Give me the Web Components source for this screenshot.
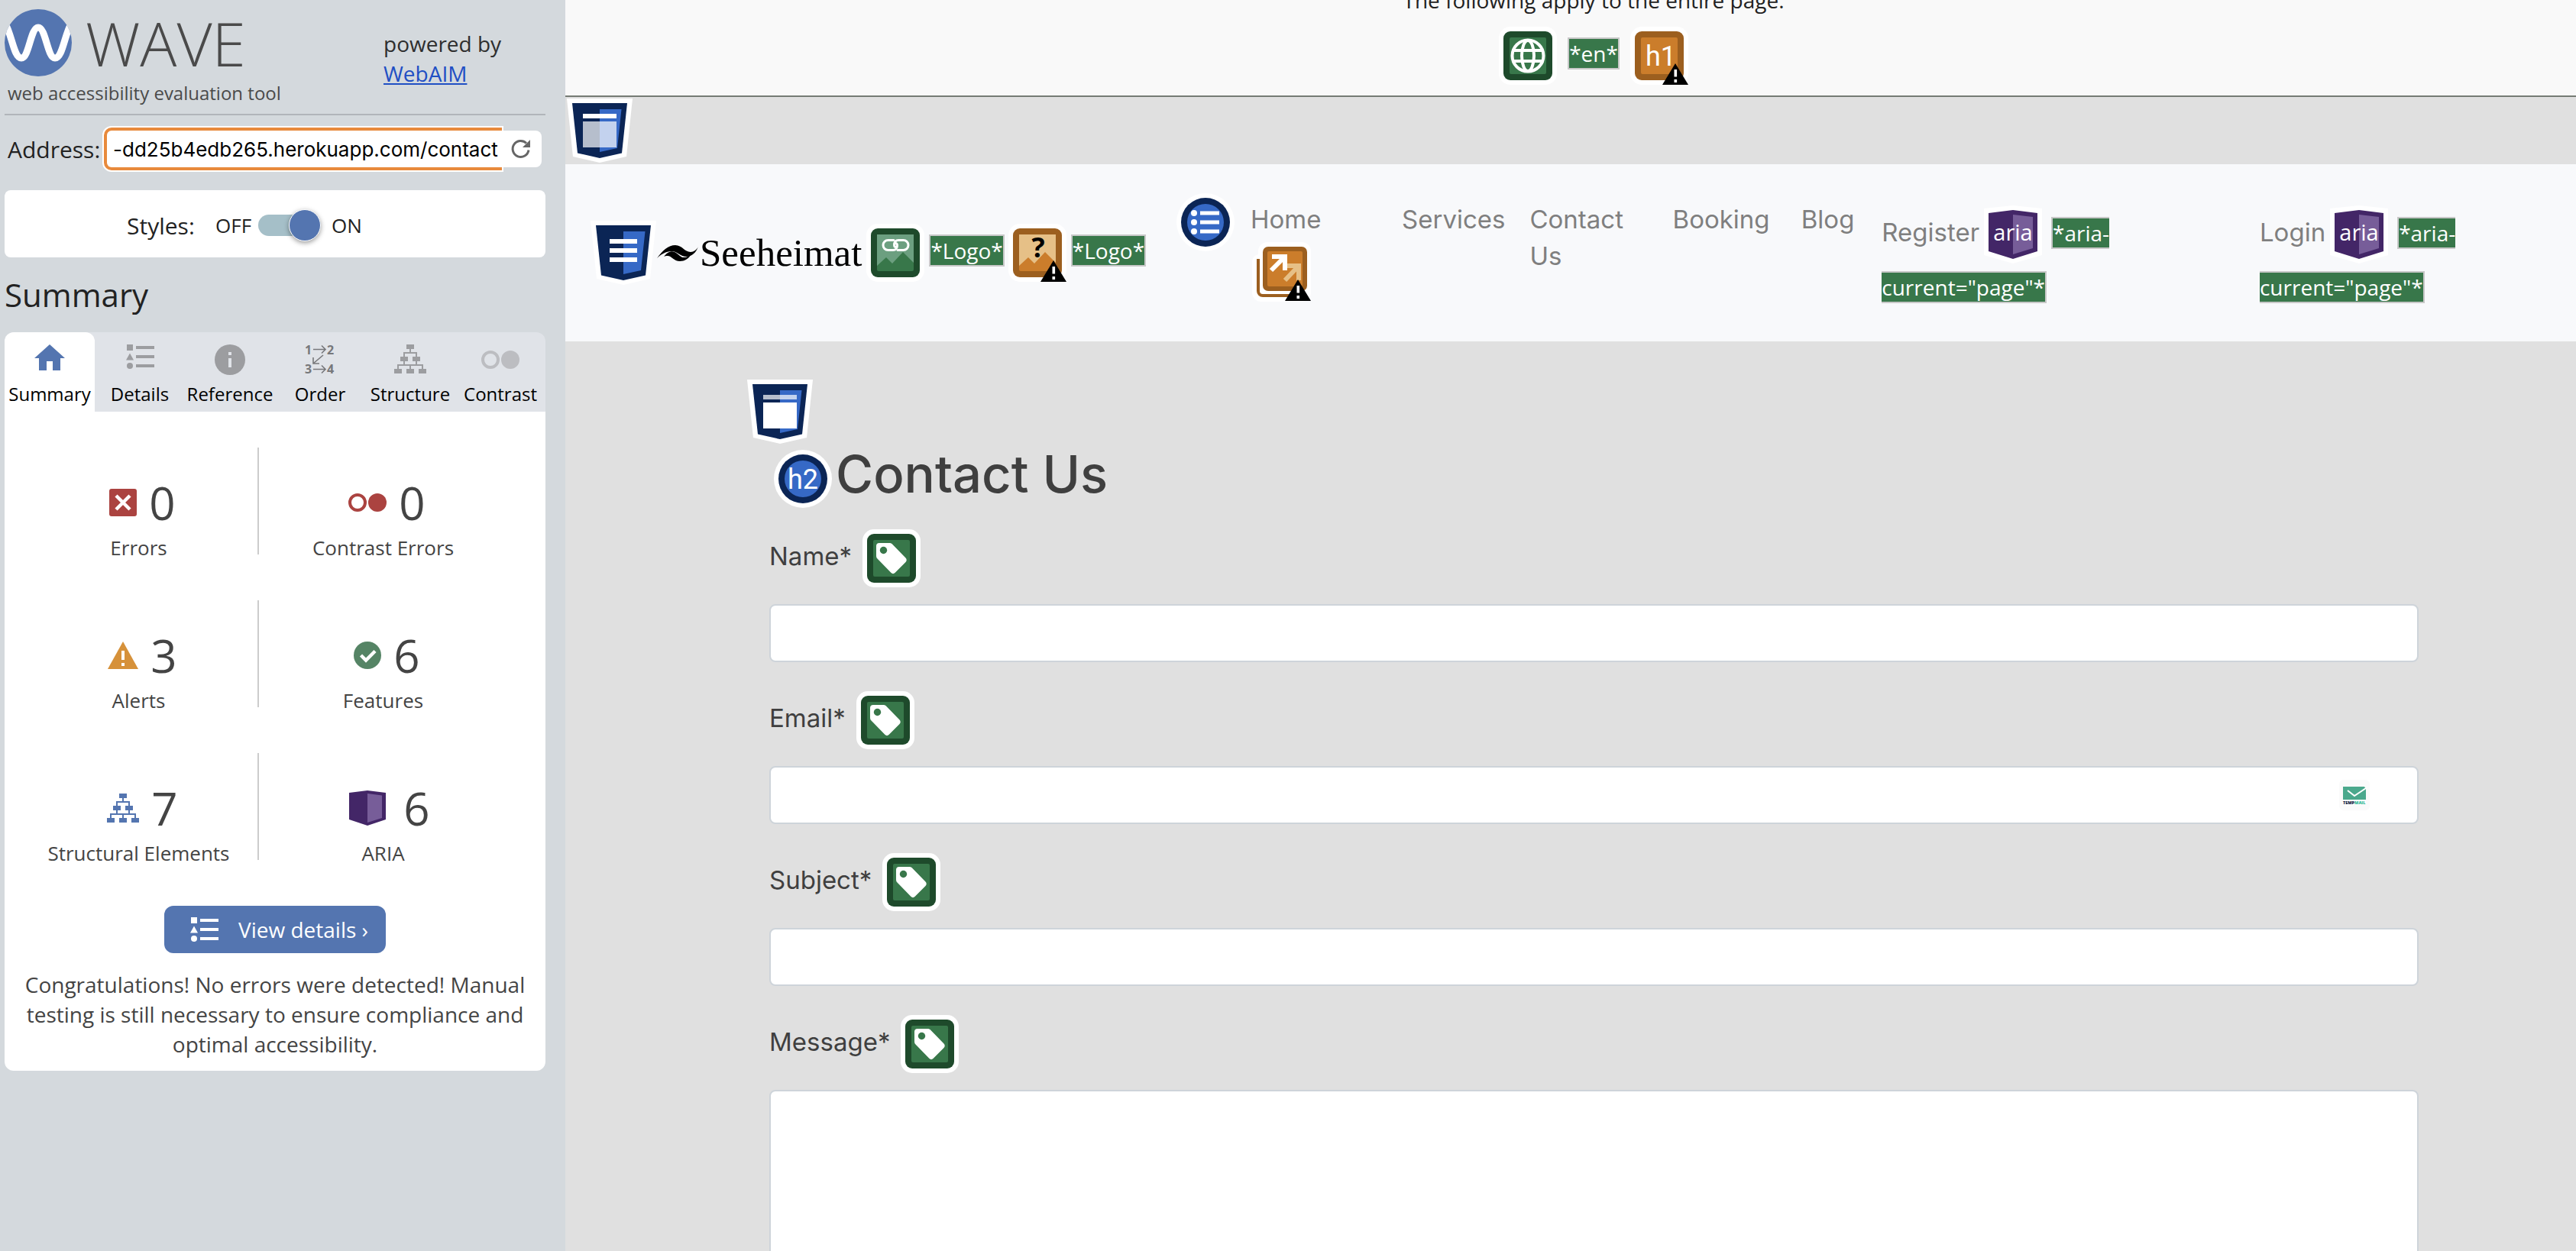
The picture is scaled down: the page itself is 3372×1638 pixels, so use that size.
<!DOCTYPE html>
<html lang="en">
<head>
<meta charset="utf-8">
<title>WAVE Report of Seeheimat</title>
<style>
  html, body { margin: 0; height: 100%; }
  body { overflow: hidden; font-family: "Open Sans", "Noto Sans", sans-serif; }
</style>
</head>
<body>
<wave-app></wave-app>

<script>
const define = (name, css, html) => {
  const template = document.createElement('template');
  template.innerHTML = `<style>*, *::before { box-sizing: border-box; } ${css}</style>`;
  customElements.define(name, class extends HTMLElement {
    connectedCallback() {
      if (this.shadowRoot) return;
      const root = this.attachShadow({ mode: 'open' });
      root.append(template.content.cloneNode(true));
      const body = document.createElement('template');
      body.innerHTML = typeof html === 'function' ? html(this) : html;
      root.append(body.content);
    }
  });
};

/* ---------- evaluation badges ---------- */
const NAVY = '#0b2555', BLUE = '#3669c6';
const alertMark = (x, y) => `<g transform="translate(${x} ${y})"><path d="M17 0 34 28H0z" fill="#000"/><path d="M15.5 8h3.6v9.500h-3.600zM15.500 21h3.600v4h-3.600z" fill="#fff"/></g>`;
const square = (dark, light, inner) => `<svg width="76" height="76" viewBox="0 0 76 76" aria-hidden="true">
  <rect width="76" height="76" rx="15" fill="#fff"/><rect x="6" y="6" width="64" height="64" rx="9" fill="${dark}"/>
  <rect x="14" y="14" width="48" height="48" rx="2" fill="${light}"/>${inner}</svg>`;
const green = inner => square('#1e4a2b', '#38774a', inner);
const orange = inner => square('#9c5f1f', '#cb7d2b', inner);
const round = inner => `<svg width="76" height="76" viewBox="0 0 76 76" aria-hidden="true">
  <circle cx="38" cy="38" r="38" fill="#fff"/><circle cx="38" cy="38" r="32" fill="${NAVY}"/>
  <circle cx="38" cy="38" r="24" fill="${BLUE}"/>${inner}</svg>`;
const shield = inner => `<svg width="86" height="84" viewBox="0 0 86 84" aria-hidden="true">
  <path d="M0 0H86L78 76 43 84 8 76z" fill="#fff"/><path d="M7 6H79L72 71.500 43 78 14 71.500z" fill="${NAVY}"/>
  <path d="M43 14H71.500L66 65 43 70z" fill="${BLUE}"/>${inner}</svg>`;
const glyph = (text, x) => `<text x="${x}" y="51" font-family="Roboto, sans-serif" font-size="36" font-weight="400" fill="#fff">${text}</text>`;
const BADGES = {
  language: green(`<g fill="none" stroke="#fff" stroke-width="4"><circle cx="38" cy="38" r="20.500"/><ellipse cx="38" cy="38" rx="8" ry="20"/><path d="M19 31H57M19 45H57"/></g>`),
  noh1: orange(glyph('h1', 20) + alertMark(42, 48)),
  header: shield(`<path d="M21 20H65V26H21z" fill="#fff"/><path d="M21 30H65V64H21z" fill="#fff" opacity=".7"/>`),
  main: shield(`<path d="M21 20H65V26H21z" fill="#fff" opacity=".7"/><path d="M21 30H65V64H21z" fill="#fff"/>`),
  nav: shield(`<path d="M25 24H61V30H25zM25 36H61V42H25zM25 48H61V54H25z" fill="#fff"/>`),
  linkalt: green(`<path d="M14 14H62V51L48 37 34 52 26 44 14 55z" fill="#6c9f80"/>
    <g fill="none" stroke="#fff" stroke-width="3" stroke-linecap="round"><path d="M36 21.500h-7.500a6.500 6.500 0 0 0 0 13H35c3.500 0 5.500-2.500 5.500-6 0-2-1-3-2.500-3"/><path d="M29 34.500M41 34.500h7.500a6.500 6.500 0 0 0 0-13H42c-3.500 0-5.500 2.500-5.500 6 0 2 1 3 2.500 3"/></g>`),
  suspiciousalt: orange(`<path d="M14 14H62V51L48 37 34 52 26 44 14 55z" fill="#e6c087"/>
    <text x="39" y="44" text-anchor="middle" font-family="Open Sans, sans-serif" font-weight="700" font-size="36" fill="#000">?</text>${alertMark(42, 48)}`),
  list: round(`<g fill="#fff"><circle cx="23" cy="26" r="4"/><circle cx="23" cy="38" r="4"/><circle cx="23" cy="50" r="4"/><path d="M31 23.500H56V28.500H31zM31 35.500H56V40.500H31zM31 47.500H56V52.500H31z"/></g>`),
  h2: round(glyph('h2', 18)),
  redundant: `<svg width="78" height="78" viewBox="0 0 78 78" aria-hidden="true">
    <path d="M20 0H65a12 12 0 0 1 12 12V66a12 12 0 0 1-12 12H12A12 12 0 0 1 0 66V26A10 10 0 0 1 8 16V12A12 12 0 0 1 20 0z" fill="#fff"/>
    <path d="M8 22V64a6 6 0 0 0 6 6H60" fill="none" stroke="#9c5f1f" stroke-width="4"/>
    <rect x="14" y="6" width="58" height="58" rx="7" fill="#9c5f1f"/><rect x="20" y="12" width="46" height="46" rx="2" fill="#cb7d2b"/>
    <path d="M46 31H61V50M61 31 43 50" fill="none" stroke="#e6c087" stroke-width="6"/>
    <path d="M26 19H43V37M43 19 25 37" fill="none" stroke="#fff" stroke-width="6"/>${alertMark(43, 49)}</svg>`,
  aria: `<svg width="76" height="76" viewBox="0 0 76 76" aria-hidden="true">
    <path d="M0 4 38 0 76 4V65L38 76 0 65z" fill="#fff"/><path d="M6 10 38 6 70 10V60L38 70 6 60z" fill="#432667"/>
    <path d="M38 12 64 15V56L38 64z" fill="#775d99"/>
    <text x="38" y="46" text-anchor="middle" font-family="Open Sans, sans-serif" font-size="29" fill="#fff">aria</text></svg>`,
  label: green(`<path d="M22 18H35c2 0 3 .5 4 1.500L56.500 37.500c1.600 1.600 1.600 4 0 5.500L42.500 57c-1.500 1.500-3.500 1.500-5 0L19.500 38.500c-1-1-1.500-2-1.500-4V22a4 4 0 0 1 4-4z" fill="#fff"/><circle cx="27.500" cy="27.500" r="4.700" fill="#38774a"/>`)
};
define('wave-badge', `
  :host { display: inline-block; vertical-align: middle; line-height: 0; }
  svg { display: block; }
`, el => BADGES[el.getAttribute('kind')]);

define('alt-text', `
  :host { display: inline; font: 28px "Open Sans", "Noto Sans", sans-serif; color: #fff;
    background: #38774a; border: 2px solid #c8c8c8; }
`, '<slot></slot>');

/* ---------- sidebar icons ---------- */
const tree = `<path d="M16 0h10v6H16zM8 16h10v6H8zM24 16h10v6H24zM0 32h10v6H0zM16 32h10v6H16zM32 32h10v6H32z"/><path d="M21 6V11M13 16V11H29V16M13 22V27M29 22V27M5 32V27H37V32M21 27V32" fill="none" stroke="currentColor" stroke-width="2"/>`;
const listShapes = `<path d="M1 0h8v8H1zM5 11.500 10 20.500H0zM13 2H37V6H13zM13 14H37V18H13zM13 26H37V30H13z"/><circle cx="5" cy="28" r="4"/>`;
const dots = `<circle cx="12" cy="12" r="10" fill="none" stroke="currentColor" stroke-width="4"/><circle cx="38" cy="12" r="12"/>`;
const ICONS = {
  home: [40, 40, `<path d="M20 0 40 18H34V34H24V22H16V34H6V18H0z"/>`],
  details: [37, 40, listShapes],
  info: [40, 40, `<circle cx="20" cy="20" r="20"/><path d="M18 10h4v4h-4zM18 18h4v12h-4z" fill="#e0e3e8"/>`],
  order: [40, 40, `<g font-family="Open Sans, sans-serif" font-weight="700" font-size="16"><text x="0" y="13">1</text><text x="29" y="13">2</text><text x="0" y="38">3</text><text x="29" y="38">4</text></g>
    <g fill="none" stroke="currentColor" stroke-width="1.600"><path d="M11 6.500H27M22 1.500 27 6.500 22 11.500M11 32.500H27M22 27.500 27 32.500 22 37.500M24 14 11 25M11 17V25H19"/></g>`],
  structure: [42, 40, tree],
  contrast: [50, 40, `<g transform="translate(0 8)">${dots}</g>`],
  error: [36, 36, `<rect width="36" height="36" rx="3"/><path d="M9 9 27 27M27 9 9 27" stroke="#fff" stroke-width="4.500"/>`],
  contrastErrors: [50, 24, dots],
  alert: [40, 36, `<path d="M20 0 40 36H0z"/><path d="M18 12h4v12h-4zM18 28h4v4h-4z" fill="#fff"/>`],
  feature: [36, 36, `<circle cx="18" cy="18" r="18"/><path d="M9.500 18 16 24.500 28 12.500" fill="none" stroke="#fff" stroke-width="4.500"/>`],
  tree: [42, 38, tree],
  ariaShield: [62, 46, `<g transform="translate(7 0)"><path d="M0 3 24 0 48 3V38L24 46 0 38z"/><path d="M24 4 43 6.500V36L24 42z" fill="#775d99"/></g>`],
  list: [37, 32, listShapes],
  reload: [26, 26, `<path d="M23 14.500A10.500 10.500 0 1 1 20 5.500" fill="none" stroke="currentColor" stroke-width="3"/><path d="M25 1V11H15z"/>`]
};
define('wave-icon', `
  :host { display: block; line-height: 0; flex: none; }
  svg { display: block; fill: currentColor; overflow: visible; }
`, el => {
  const [w, h, shapes] = ICONS[el.getAttribute('name')];
  return `<svg width="${w}" height="${h}" viewBox="0 0 ${w} ${h}" aria-hidden="true">${shapes}</svg>`;
});

/* ---------- sidebar ---------- */
define('wave-brand', `
  :host { display: flex; justify-content: space-between; border-bottom: 2px solid #b1b5ba; padding-top: 12px; height: 151px; }
  .name { display: flex; gap: 18px; font-size: 80px; line-height: 88px; font-weight: 300; color: #4a4a4a; }
  h1 { margin: 0; font: inherit; }
  p { margin: 4px 0 0 4px; font-size: 24px; line-height: 36px; color: #4a4a4a; }
  .by { width: 212px; padding-top: 26px; font-size: 28px; line-height: 39px; color: #2e2e2e; }
  a { display: block; color: #1f4fc4; }
`, `<div><div class="name">
    <svg width="88" height="88" viewBox="0 0 88 88" aria-hidden="true"><clipPath id="c"><circle cx="44" cy="44" r="44"/></clipPath>
      <circle cx="44" cy="44" r="44" fill="#5475b0"/>
      <path clip-path="url(#c)" d="M0 17C10 34 12 64 22 64S34 24 44 24S56 64 66 64S78 34 88 17" fill="none" stroke="#fff" stroke-width="9"/></svg>
    <h1>WAVE</h1></div><p>web accessibility evaluation tool</p></div>
  <div class="by">powered by <a href="#webaim">WebAIM</a></div>`);

define('address-bar', `
  :host { display: flex; align-items: center; margin: 16px 5px 0 4px; height: 56px; }
  label { font-size: 30px; color: #222; width: 126px; flex: none; }
  input { flex: 1; min-width: 0; height: 56px; border: 4px solid #e88a3c; border-right: 0; border-radius: 10px 0 0 10px;
    box-shadow: 0 0 0 2px #fff; outline: 0; padding: 0 0 0 8px; font: 26px Inter, sans-serif; color: #000; background: #fff; }
  button { position: relative; width: 52px; height: 48px; border: 0; padding: 0 0 0 12px; background: #fff; border-radius: 0 8px 8px 0; color: #666; }
`, `<label for="url">Address:</label><input id="url" type="text" value="-dd25b4edb265.herokuapp.com/contact">
  <button type="button" aria-label="Reload"><wave-icon name="reload"></wave-icon></button>`);

define('style-switch', `
  :host { display: flex; align-items: center; height: 88px; margin-top: 26px; padding: 4px 0 0 160px; background: #fff; border-radius: 8px;
    font-size: 26px; color: #222; box-sizing: border-box; }
  label { font-size: 30px; width: 116px; }
  .off { width: 56px; }
  input { appearance: none; display: flex; align-items: center; justify-content: flex-end; width: 82px; height: 28px; margin: 0 14px 0 0;
    border-radius: 14px; background: #a5bfc8; }
  input::before { content: ""; flex: none; width: 42px; height: 42px; border-radius: 50%; background: #5475b0; border: 1px solid #fff; box-shadow: 0 2px 6px #0006; }
`, `<label for="sw">Styles:</label><span class="off">OFF</span><input id="sw" type="checkbox" role="switch" checked><span>ON</span>`);

define('panel-tab', `
  :host { display: flex; flex: 1; }
  button { flex: 1; display: flex; flex-direction: column; align-items: center; gap: 8px; border: 0; padding: 16px 0 7px; margin: 0;
    background: none; border-radius: 12px 12px 0 0; font: 24px/33px "Open Sans", sans-serif; color: #000; min-width: 0; }
  wave-icon { color: #9c9da0; }
  :host([name="order"]) wave-icon { color: #77787b; }
  :host([name="contrast"]) wave-icon { color: #bcbdc1; }
  :host([selected]) button { background: #fff; }
  :host([selected]) wave-icon { color: #5475b0; }
`, el => `<button type="button" role="tab" aria-selected="${el.hasAttribute('selected')}"><wave-icon name="${el.getAttribute('name')}"></wave-icon><slot></slot></button>`);

define('stat-card', `
  :host { display: block; flex: 1; padding-top: 32px; color: #444; text-align: center; }
  :host([wide]) { flex: none; width: 325px; }
  .value { display: flex; align-items: center; justify-content: center; gap: 16px; font-size: 60px; line-height: 80px; padding-left: 10px; }
  .label { font-size: 26px; line-height: 38px; }
`, el => `<div class="value"><wave-icon name="${el.getAttribute('icon')}" style="color:${el.getAttribute('tint')}"></wave-icon>${el.getAttribute('value')}</div><div class="label"><slot></slot></div>`);

define('stat-row', `
  :host { display: flex; height: 200px; padding: 0 50px 0 20px; }
  i { width: 2px; height: 140px; background: #ccc; order: 1; }
  ::slotted([wide]) { order: 2; }
`, '<i></i><slot></slot>');

define('summary-panel', `
  :host { display: block; }
  h2 { margin: 20px 0 21px; font-size: 42px; line-height: 57px; font-weight: 400; color: #222; }
  .tabs { display: flex; height: 104px; background: #e0e3e8; border-radius: 12px 12px 0 0; }
  .body { background: #fff; border-radius: 0 0 12px 12px; padding: 47px 0 15px; }
  button { display: flex; align-items: center; gap: 26px; width: 290px; height: 62px; margin: 0 auto 22px; padding: 0 0 0 34px; border: 0; border-radius: 12px;
    background: #5475b0; color: #fff; font: 28px "Open Sans", sans-serif; }
  p { margin: 0; padding: 0 20px; text-align: center; font-size: 28px; line-height: 39px; color: #444; }
`, `<h2>Summary</h2>
  <div class="tabs" role="tablist">
    <panel-tab name="home" selected>Summary</panel-tab><panel-tab name="details">Details</panel-tab><panel-tab name="info">Reference</panel-tab>
    <panel-tab name="order">Order</panel-tab><panel-tab name="structure">Structure</panel-tab><panel-tab name="contrast">Contrast</panel-tab>
  </div>
  <div class="body">
    <stat-row><stat-card icon="error" tint="#ab4340" value="0">Errors</stat-card><stat-card wide icon="contrastErrors" tint="#ab4340" value="0">Contrast Errors</stat-card></stat-row>
    <stat-row><stat-card icon="alert" tint="#d6913a" value="3">Alerts</stat-card><stat-card wide icon="feature" tint="#558465" value="6">Features</stat-card></stat-row>
    <stat-row><stat-card icon="tree" tint="#5475b0" value="7">Structural Elements</stat-card><stat-card wide icon="ariaShield" tint="#432667" value="6">ARIA</stat-card></stat-row>
    <button type="button"><wave-icon name="list"></wave-icon>View details ›</button>
    <p>Congratulations! No errors were detected! Manual testing is still necessary to ensure compliance and optimal accessibility.</p>
  </div>`);

define('wave-sidebar', `
  :host { display: block; background: #d4d9dd; padding: 0 26px 0 6px; }
`, `<wave-brand></wave-brand><address-bar></address-bar><style-switch></style-switch><summary-panel></summary-panel>`);

/* ---------- evaluated page ---------- */
define('page-notes', `
  :host { display: flex; flex-direction: column; justify-content: flex-end; align-items: center; gap: 14px; height: 127px; overflow: hidden;
    padding: 0 0 14px 60px; background: #f9f9f9; border-bottom: 2px solid #757b74; color: #222; font-size: 28px; line-height: 41px; box-sizing: border-box; }
  p { margin: 0; flex: none; }
  div { flex: none; white-space: nowrap; }
  alt-text { margin: 0 14px; }
`, `<p>The following apply to the entire page:</p>
  <div><wave-badge kind="language"></wave-badge><alt-text>*en*</alt-text><wave-badge kind="noh1"></wave-badge></div>`);

define('nav-link', `
  :host { display: block; padding: 0 16px; }
  a { color: #7f7f7f; text-decoration: none; }
  ::slotted(wave-badge) { margin: 6px; }
  ::slotted(wave-badge[kind="redundant"]) { margin: 6px 6px 4px 2px; }
`, '<a href="#page"><slot></slot></a>');

define('site-header', `
  :host { display: flex; align-items: center; padding: 38px 16px 38px 33px; background: #f8f9fb; }
  a { color: #000; text-decoration: none; white-space: nowrap; font-size: 28px; line-height: 41px; }
  .logo { display: inline-flex; align-items: center; vertical-align: middle; gap: 1px; font: 51px "Liberation Serif", serif; margin-right: 6px; }
  .start { display: flex; align-items: center; width: 767px; flex: none; }
  alt-text { margin: 0 5px 0 6px; }
  nav { display: flex; align-items: flex-start; gap: 5px; flex: 1; min-width: 0; }
  .links { flex: 1; min-width: 0; display: grid; grid-template-columns: 199fr 161fr 188fr 169fr 106fr 497fr 416fr; padding: 10px 0;
    font: 33px/48px Inter, sans-serif; }
`, `<div class="start"><wave-badge kind="nav"></wave-badge>
    <a href="#home"><span class="logo"><svg width="56" height="24" viewBox="0 0 56 24" aria-hidden="true">
      <path d="M1 19C8 9 16 2 25 2c9 0 12 9 20 9 4 0 8-3 10-7-3 8-9 13-15 13-9 0-12-7-20-7C13 10 6 14 1 19z"/>
      <path d="M10 17c4-5 9-8 14-6 5 2 8 8 13 7 3 0 6-2 9-4-4 6-9 9-15 9-8 0-11-7-16-7-2 0-4 0-5 1z"/></svg>Seeheimat</span><wave-badge kind="linkalt"></wave-badge><alt-text>*Logo*</alt-text><wave-badge kind="suspiciousalt"></wave-badge><alt-text>*Logo*</alt-text></a></div>
  <nav><wave-badge kind="list"></wave-badge><div class="links">
    <nav-link>Home <wave-badge kind="redundant"></wave-badge></nav-link><nav-link>Services</nav-link><nav-link>Contact Us</nav-link>
    <nav-link>Booking</nav-link><nav-link>Blog</nav-link>
    <nav-link>Register<wave-badge kind="aria"></wave-badge><alt-text>*aria-current="page"*</alt-text></nav-link>
    <nav-link>Login<wave-badge kind="aria"></wave-badge><alt-text>*aria-current="page"*</alt-text></nav-link>
  </div></nav>`);

define('form-field', `
  :host { display: block; }
  .top { height: 76px; line-height: 48px; }
  label { margin-right: 14px; }
  .box { display: flex; align-items: center; margin-top: 22px; background: #fff; border: 2px solid #ced4da; border-radius: 8px; }
  input, textarea { flex: 1; min-width: 0; height: 72px; border: 0; outline: 0; background: none; padding: 0 24px; font: inherit; resize: none; }
  textarea { height: 400px; padding: 12px 24px; }
  svg { margin-right: 62px; flex: none; }
`, el => `<div class="top"><label for="f"><slot></slot></label><wave-badge kind="label"></wave-badge></div>
  <div class="box">${el.getAttribute('type') === 'area' ? '<textarea id="f"></textarea>' : `<input id="f" type="${el.getAttribute('type')}">`}${el.getAttribute('type') === 'email' ? `
    <svg width="40" height="40" viewBox="0 0 40 40" aria-hidden="true"><rect width="40" height="40" rx="6" fill="#fafafa"/>
      <path d="M5 9H33L35 12V26H5z" fill="#4aa88c"/><path d="M11 14 20 21 35 11" fill="none" stroke="#fff" stroke-width="2"/>
      <text x="5" y="32" font-family="Open Sans, sans-serif" font-weight="800" font-size="5.500" fill="#14213f">TEMP<tspan fill="#35b996">MAIL</tspan></text></svg>` : ''}</div>`);

define('contact-form', `
  :host { display: block; padding: 50px 206px 0 238px; color: #3f3f3f; font: 33px Inter, sans-serif; }
  .inner { padding-left: 29px; }
  h2 { height: 76px; margin: 8px 0 28px 6px; font-size: 67px; line-height: 60px; font-weight: 500; white-space: nowrap; }
  h2 wave-badge { margin-right: 5px; }
  form { display: flex; flex-direction: column; gap: 38px; }
  wave-badge { display: block; width: fit-content; }
  h2 wave-badge { display: inline-block; }
`, `<wave-badge kind="main"></wave-badge><div class="inner">
    <h2><wave-badge kind="h2"></wave-badge>Contact Us</h2>
    <form><form-field type="text">Name*</form-field><form-field type="email">Email*</form-field>
      <form-field type="text">Subject*</form-field><form-field type="area">Message*</form-field></form></div>`);

define('page-preview', `
  :host { display: block; min-width: 0; background: #e0e0e0; overflow: hidden; }
  .strip { height: 88px; padding: 2px; }
`, `<page-notes></page-notes><div class="strip"><wave-badge kind="header"></wave-badge></div>
  <site-header></site-header><contact-form></contact-form>`);

define('wave-app', `
  :host { display: grid; grid-template-columns: 740px minmax(0, 1fr); height: 100vh; overflow: hidden; }
`, `<wave-sidebar></wave-sidebar><page-preview></page-preview>`);
</script>
</body>
</html>
